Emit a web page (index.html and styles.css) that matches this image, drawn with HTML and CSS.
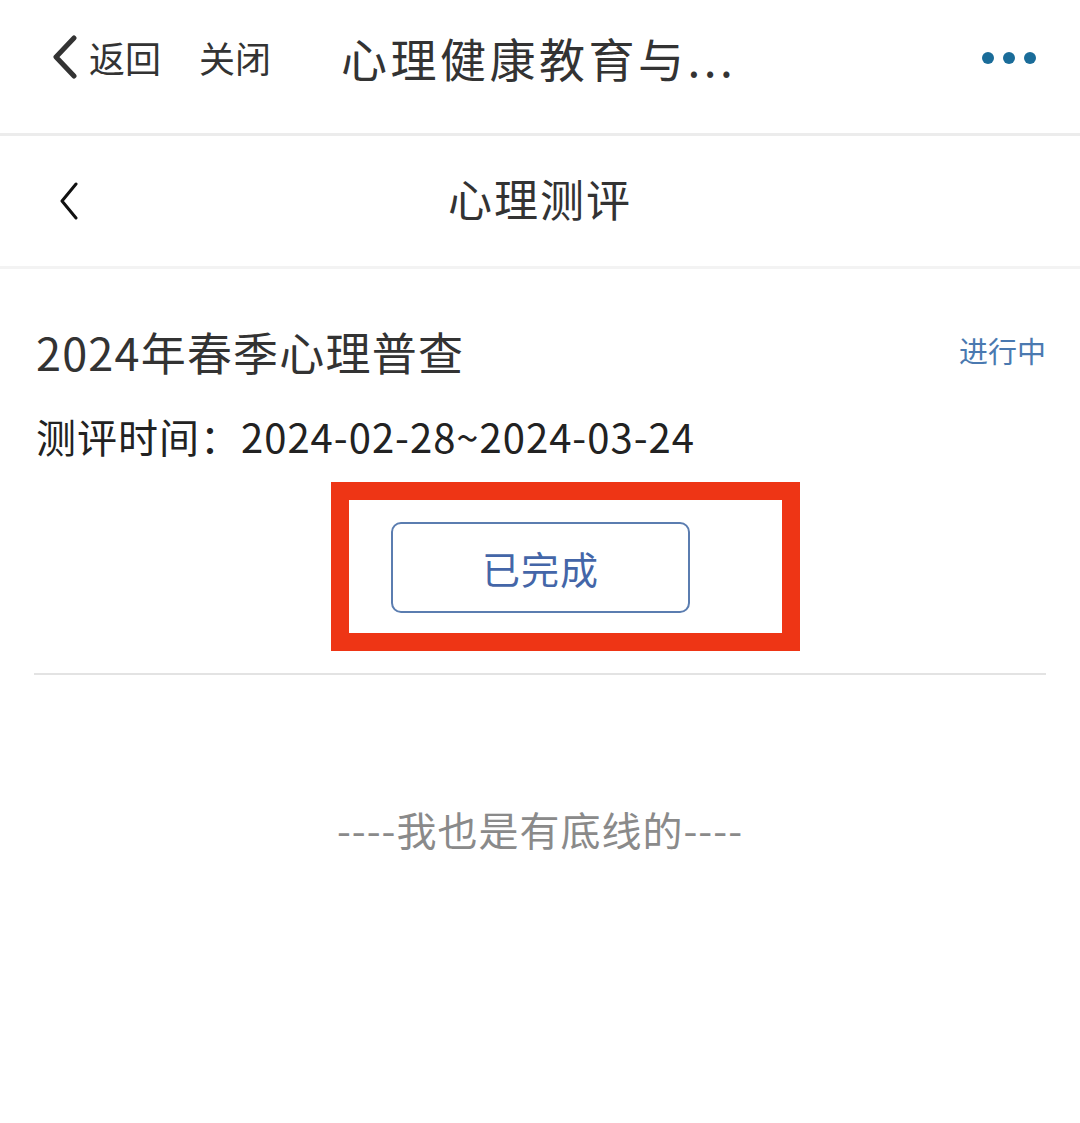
FILE: index.html
```html
<!DOCTYPE html>
<html lang="zh">
<head>
<meta charset="utf-8">
<link rel="stylesheet" href="styles.css">
</head>
<body>
<header class="topbar">
  <div class="back">
    <svg class="chev" width="30" height="44" viewBox="0 0 30 44"><path d="M24 3 L6 22 L24 41" fill="none" stroke="#333" stroke-width="5" stroke-linecap="round" stroke-linejoin="round"/></svg>
    <span>返回</span>
  </div>
  <span class="close">关闭</span>
  <span class="apptitle">心理健康教育与...</span>
  <div class="more"><i></i><i></i><i></i></div>
</header>
<nav class="navbar">
  <svg class="navback" width="22" height="38" viewBox="0 0 22 38"><path d="M18 2 L4 19 L18 36" fill="none" stroke="#111" stroke-width="3" stroke-linecap="round" stroke-linejoin="round"/></svg>
  <h1>心理测评</h1>
</nav>
<main class="card">
  <div class="row">
    <h2>2024年春季心理普查</h2>
    <span class="status">进行中</span>
  </div>
  <p class="time">测评时间：2024-02-28~2024-03-24</p>
  <div class="btnwrap">
    <div class="redbox">
      <div class="btn">已完成</div>
    </div>
  </div>
</main>
<p class="footer">----我也是有底线的----</p>
</body>
</html>
```
FILE: styles.css
```css
* { box-sizing: border-box; }
body {
  margin: 0;
  background: #fff;
  font-family: "Noto Sans CJK SC", "Noto Sans", sans-serif;
  color: #333;
  width: 1080px;
  height: 1123px;
  overflow: hidden;
}
.topbar {
  height: 136px;
  display: flex;
  align-items: center;
  padding: 0 44px 20px 50px;
  border-bottom: 3px solid #ececec;
  position: relative;
}
.back { display: flex; align-items: center; gap: 9px; }
.back span, .close { font-size: 36px; color: #333; line-height: 1; }
.close { margin-left: 38px; }
.apptitle { font-size: 46px; margin-left: 70px; color: #333; letter-spacing: 3.5px; line-height: 1; }
.more { margin-left: auto; display: flex; gap: 9px; margin-top: 2px; }
.more i { width: 12px; height: 12px; border-radius: 50%; background: #1a6c99; display: block; }
.navbar {
  height: 133px;
  display: flex;
  align-items: center;
  justify-content: center;
  position: relative;
  border-bottom: 3px solid #f3f3f3;
  padding-bottom: 6px;
}
.navback { position: absolute; left: 58px; top: 46px; }
.navbar h1 { margin: 0; font-size: 44px; font-weight: 400; color: #333; letter-spacing: 2px; line-height: 1; }
.card { margin: 0 34px; border-bottom: 2px solid #e3e3e3; padding-bottom: 22px; }
.row { display: flex; justify-content: space-between; align-items: center; padding-top: 60px; }
.row h2 { margin: 0 0 0 2px; font-size: 45px; font-weight: 400; color: #333; line-height: 1; letter-spacing: 1.2px; }
.status { font-size: 29px; color: #4a79b0; line-height: 1; margin-top: -2px; }
.time { margin: 42px 0 0 2px; font-size: 40px; color: #222; line-height: 1; letter-spacing: 1px; }
.btnwrap { display: flex; justify-content: center; margin-top: 26px; padding-left: 51px; }
.redbox { border: 18px solid #ee3515; padding: 22px 92px 20px 42px; }
.btn {
  width: 299px; height: 91px;
  border: 2px solid #5b7db0;
  border-radius: 10px;
  display: flex; align-items: center; justify-content: center;
  font-size: 38px; color: #4466a8; letter-spacing: 1px;
}
.footer { text-align: center; font-size: 40px; color: #8a8a8a; margin: 134px 0 0; line-height: 1; letter-spacing: 1px; }
```
